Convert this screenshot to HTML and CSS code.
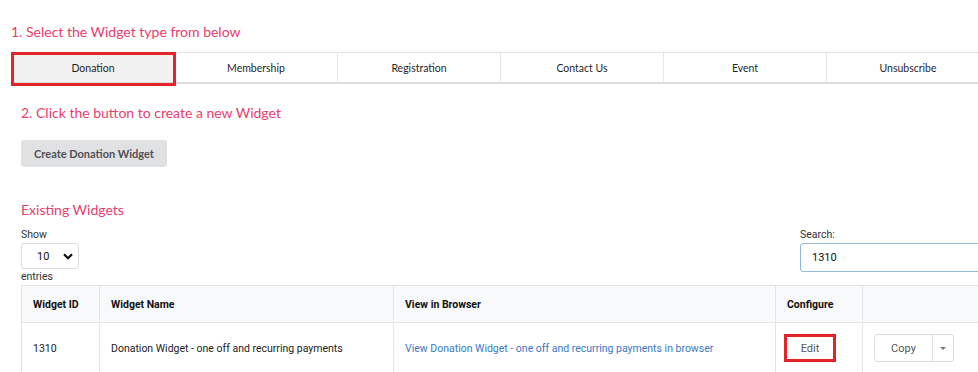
FILE: index.html
```html
<!DOCTYPE html>
<html>
<head>
<meta charset="utf-8">
<link rel="stylesheet" href="styles.css">
</head>
<body>
<div class="page">
  <h2 class="step step-first">1. Select the Widget type from below</h2>
  <nav class="tabs">
    <div class="tab active">Donation</div>
    <div class="tab">Membership</div>
    <div class="tab">Registration</div>
    <div class="tab">Contact Us</div>
    <div class="tab">Event</div>
    <div class="tab">Unsubscribe</div>
  </nav>
  <div class="section">
    <h2 class="step step-second">2. Click the button to create a new Widget</h2>
    <button class="create">Create Donation Widget</button>
    <h2 class="step step-third">Existing Widgets</h2>
    <div class="controls">
      <div class="length">
        <div class="label">Show</div>
        <div class="select"><span>10</span>
          <svg class="chev" width="10" height="7" viewBox="0 0 10 7"><path d="M1 1.2 L5 5.2 L9 1.2" fill="none" stroke="#111" stroke-width="2.2"/></svg>
        </div>
        <div class="label">entries</div>
      </div>
      <div class="search">
        <div class="label">Search:</div>
        <div class="input">1310</div>
      </div>
    </div>
    <table class="grid">
      <thead>
        <tr>
          <th class="c1">Widget ID</th>
          <th class="c2">Widget Name</th>
          <th class="c3">View in Browser</th>
          <th class="c4">Configure</th>
          <th class="c5"></th>
        </tr>
      </thead>
      <tbody>
        <tr>
          <td>1310</td>
          <td>Donation Widget - one off and recurring payments</td>
          <td><a class="link" href="#">View Donation Widget - one off and recurring payments in browser</a></td>
          <td><span class="edit">Edit</span></td>
          <td>
            <div class="btn-group"><span class="copy">Copy</span><span class="caret-btn"><span class="caret"></span></span></div>
          </td>
        </tr>
      </tbody>
    </table>
  </div>
</div>
</body>
</html>
```
FILE: styles.css
```css
html, body { margin: 0; padding: 0; background: #fff; overflow: hidden; }
body { width: 978px; height: 372px; }
.page { width: 1010px; }

.step {
  font-family: Lato, "Open Sans", sans-serif;
  font-weight: 400;
  font-size: 14px;
  line-height: 18px;
  color: #e63e6d;
  margin: 0;
}
.step-first { margin: 23px 0 11px 11px; }
.step-second { margin-top: 20px; }
.step-third { margin-top: 34px; }

.tabs {
  display: flex;
  margin-left: 12px;
  width: 977px;
  height: 29px;
  border-top: 1px solid #e3e3e3;
  border-bottom: 2px solid #dedede;
}
.tab {
  flex: 1;
  display: flex;
  align-items: center;
  justify-content: center;
  font-family: Lato, "Open Sans", sans-serif;
  font-size: 10.5px;
  color: #1f1f2a;
  border-left: 1px solid #e6e6e6;
}
.tab:first-child { border-left: none; }
.tab.active { background: #f1f1f1; position: relative; }
.tab.active::after {
  content: "";
  position: absolute;
  left: -1px; top: -1px; right: -2px; bottom: -4px;
  border: 3px solid #e3252a;
}

.section { margin-left: 21px; width: 979px; }

.create {
  display: block;
  margin-top: 18px;
  width: 146px;
  height: 27px;
  padding: 0;
  border: none;
  border-radius: 3px;
  background: #e0e1e2;
  font-family: Lato, "Open Sans", sans-serif;
  font-weight: 700;
  font-size: 11px;
  color: #505055;
}

.controls {
  display: flex;
  justify-content: space-between;
  margin-top: 9px;
  font-family: Roboto, Arial, sans-serif;
  font-size: 10.5px;
  color: #333;
}
.label { line-height: 14px; height: 14px; }
.length .label:first-child { margin-bottom: 1px; }
.select {
  box-sizing: border-box;
  width: 58px;
  height: 26px;
  border: 1px solid #dcdcdc;
  border-radius: 3px;
  display: flex;
  align-items: center;
  font-size: 11px;
  color: #111;
}
.select span { margin-left: 15px; flex: 1; }
.select .chev { margin-right: 5px; }
.length .label:last-child { margin-top: 1px; }

.search { width: 200px; }
.search .label { margin-bottom: 1px; }
.input {
  box-sizing: border-box;
  height: 29px;
  border: 1px solid #8fb8dc;
  border-radius: 3px;
  padding-left: 11px;
  display: flex;
  align-items: center;
  font-size: 11px;
  color: #111;
}

.grid {
  border-collapse: collapse;
  width: 979px;
  font-family: Roboto, Arial, sans-serif;
  font-size: 10.5px;
  color: #222;
  margin-top: 1px;
}
.grid th, .grid td {
  border: 1px solid #e4e5e7;
  text-align: left;
  padding: 0 11px;
}
.grid th {
  height: 36px;
  font-weight: 700;
  background: #f8f9fa;
  color: #111;
}
.grid td { height: 50px; }
.c1 { width: 55px; }
.c2 { width: 271px; }
.c3 { width: 359px; }
.c4 { width: 64px; }

.link { color: #3b78c4; text-decoration: none; }

.edit {
  display: inline-flex;
  box-sizing: border-box;
  width: 52px;
  height: 28px;
  border: 3px solid #e3252a;
  align-items: center;
  justify-content: center;
  color: #555;
  font-size: 11px;
  margin-left: -3px;
  vertical-align: middle;
}

.btn-group {
  display: inline-flex;
  box-sizing: border-box;
  height: 28px;
  border: 1px solid #dcdcdc;
  border-radius: 3px;
  vertical-align: middle;
}
.copy {
  width: 57px;
  display: flex;
  align-items: center;
  justify-content: center;
  font-size: 11px;
  color: #555;
  border-right: 1px solid #dcdcdc;
}
.caret-btn {
  width: 20px;
  display: flex;
  align-items: center;
  justify-content: center;
}
.caret {
  width: 0; height: 0;
  border-left: 3px solid transparent;
  border-right: 3px solid transparent;
  border-top: 3px solid #777;
}
```
